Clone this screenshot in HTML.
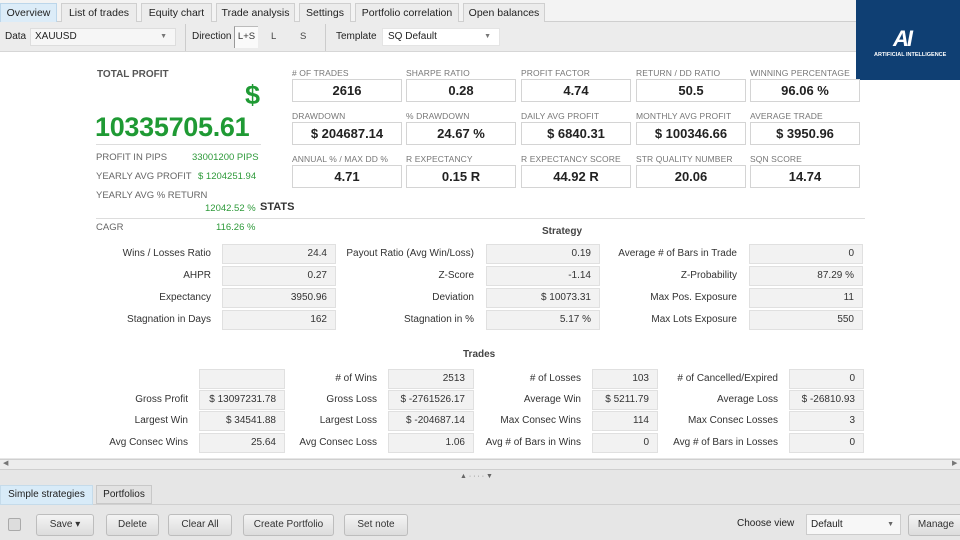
<!DOCTYPE html>
<html><head><meta charset="utf-8"><style>
*{margin:0;padding:0;box-sizing:border-box}
body{width:960px;height:540px;overflow:hidden;background:#fff;font-family:"Liberation Sans",sans-serif;font-size:10px;color:#333;position:relative}
.a{position:absolute;white-space:nowrap}
.tab{position:absolute;top:3px;height:19px;border:1px solid #cfcfcf;border-bottom:none;background:#ececec;font-size:10.5px;line-height:18px;text-align:center;color:#222}
.ml{position:absolute;font-size:8.5px;color:#777;letter-spacing:.1px}
.mb{position:absolute;width:110px;height:23px;border:1px solid #d4d4d4;background:#fff;font-weight:bold;font-size:13px;line-height:21px;text-align:center;color:#222}
.lb{position:absolute;text-align:right;font-size:10px;color:#333;line-height:19px}
.vb{position:absolute;height:20px;background:#f2f2f2;border:1px solid #e0e0e0;text-align:right;padding-right:8px;font-size:10px;line-height:18px;color:#333}
.gl{position:absolute;font-size:9.5px;color:#666}
.gv{position:absolute;font-size:9.5px;color:#2e9a3a}
.btn{position:absolute;top:514px;height:22px;border:1px solid #bdbdbd;border-radius:3px;background:linear-gradient(#f4f4f4,#dcdcdc);font-size:10px;line-height:20px;text-align:center;color:#333}
</style></head><body>
<!-- top tabs bar -->
<div class="a" style="left:0;top:0;width:960px;height:22px;background:#f3f3f3;border-bottom:1px solid #cfcfcf"></div>
<div class="tab" style="left:0;width:57px;background:#dcecf8;border-color:#bcd6ea">Overview</div>
<div class="tab" style="left:61;left:61px;width:76px">List of trades</div>
<div class="tab" style="left:141px;width:71px">Equity chart</div>
<div class="tab" style="left:216px;width:79px">Trade analysis</div>
<div class="tab" style="left:299px;width:52px">Settings</div>
<div class="tab" style="left:355px;width:104px">Portfolio correlation</div>
<div class="tab" style="left:463px;width:82px">Open balances</div>
<!-- toolbar -->
<div class="a" style="left:0;top:22px;width:960px;height:30px;background:#ececec;border-bottom:1px solid #d6d6d6"></div>
<div class="a" style="left:5px;top:31px;font-size:10px;color:#222">Data</div>
<div class="a" style="left:30px;top:28px;width:146px;height:18px;background:#f6f6f6;border:1px solid #ddd;font-size:10px;line-height:16px;padding-left:4px;color:#222">XAUUSD<span style="position:absolute;right:8px;font-size:7px;color:#777">▼</span></div>
<div class="a" style="left:185px;top:24px;width:1px;height:27px;background:#ccc"></div>
<div class="a" style="left:192px;top:31px;font-size:10px;color:#222">Direction</div>
<div class="a" style="left:234px;top:26px;width:24px;height:22px;background:#fafafa;border-left:1px solid #999;border-top:1px solid #bbb;font-size:9.5px;line-height:20px;text-align:center;color:#333">L+S</div>
<div class="a" style="left:271px;top:31px;font-size:9.5px;color:#444">L</div>
<div class="a" style="left:300px;top:31px;font-size:9.5px;color:#444">S</div>
<div class="a" style="left:325px;top:24px;width:1px;height:27px;background:#ccc"></div>
<div class="a" style="left:336px;top:31px;font-size:10px;color:#222">Template</div>
<div class="a" style="left:382px;top:28px;width:118px;height:18px;background:#fff;border:1px solid #e4e4e4;font-size:10px;line-height:16px;padding-left:5px;color:#222">SQ Default<span style="position:absolute;right:8px;font-size:7px;color:#777">▼</span></div>
<!-- logo -->
<div class="a" style="left:856px;top:0;width:104px;height:80px;background:#0f3f73"></div>
<div class="a" style="left:893px;top:26px;font-size:22px;font-weight:bold;font-style:italic;color:#fff;letter-spacing:-2px">AI</div>
<div class="a" style="left:874px;top:52px;font-size:5.5px;font-weight:bold;color:#fff">ARTIFICIAL INTELLIGENCE</div>
<!-- total profit -->
<div class="a" style="left:97px;top:69px;font-size:10px;font-weight:bold;color:#555">TOTAL PROFIT</div>
<div class="a" style="left:245px;top:80px;font-size:27px;font-weight:bold;color:#1f9a34">$</div>
<div class="a" style="left:95px;top:112px;font-size:27px;font-weight:bold;color:#1f9a34;letter-spacing:-.3px">10335705.61</div>
<div class="a" style="left:96px;top:144px;width:165px;height:1px;background:#ddd"></div>
<div class="gl" style="left:96px;top:152px">PROFIT IN PIPS</div><div class="gv" style="left:192px;top:152px">33001200 PIPS</div>
<div class="gl" style="left:96px;top:171px">YEARLY AVG PROFIT</div><div class="gv" style="left:198px;top:171px">$ 1204251.94</div>
<div class="gl" style="left:96px;top:190px">YEARLY AVG % RETURN</div><div class="gv" style="left:205px;top:203px">12042.52 %</div>
<div class="a" style="left:260px;top:201px;font-size:11px;font-weight:bold;color:#333">STATS</div>
<div class="a" style="left:96px;top:218px;width:769px;height:1px;background:#ddd"></div>
<div class="gl" style="left:96px;top:222px">CAGR</div><div class="gv" style="left:216px;top:222px">116.26 %</div>
<!-- metrics -->
<div class="ml" style="left:292px;top:68px"># OF TRADES</div><div class="mb" style="left:292px;top:79px">2616</div>
<div class="ml" style="left:406px;top:68px">SHARPE RATIO</div><div class="mb" style="left:406px;top:79px">0.28</div>
<div class="ml" style="left:521px;top:68px">PROFIT FACTOR</div><div class="mb" style="left:521px;top:79px">4.74</div>
<div class="ml" style="left:636px;top:68px">RETURN / DD RATIO</div><div class="mb" style="left:636px;top:79px">50.5</div>
<div class="ml" style="left:750px;top:68px">WINNING PERCENTAGE</div><div class="mb" style="left:750px;top:79px">96.06 %</div>
<div class="ml" style="left:292px;top:111px">DRAWDOWN</div><div class="mb" style="left:292px;top:122px">$ 204687.14</div>
<div class="ml" style="left:406px;top:111px">% DRAWDOWN</div><div class="mb" style="left:406px;top:122px">24.67 %</div>
<div class="ml" style="left:521px;top:111px">DAILY AVG PROFIT</div><div class="mb" style="left:521px;top:122px">$ 6840.31</div>
<div class="ml" style="left:636px;top:111px">MONTHLY AVG PROFIT</div><div class="mb" style="left:636px;top:122px">$ 100346.66</div>
<div class="ml" style="left:750px;top:111px">AVERAGE TRADE</div><div class="mb" style="left:750px;top:122px">$ 3950.96</div>
<div class="ml" style="left:292px;top:154px">ANNUAL % / MAX DD %</div><div class="mb" style="left:292px;top:165px">4.71</div>
<div class="ml" style="left:406px;top:154px">R EXPECTANCY</div><div class="mb" style="left:406px;top:165px">0.15 R</div>
<div class="ml" style="left:521px;top:154px">R EXPECTANCY SCORE</div><div class="mb" style="left:521px;top:165px">44.92 R</div>
<div class="ml" style="left:636px;top:154px">STR QUALITY NUMBER</div><div class="mb" style="left:636px;top:165px">20.06</div>
<div class="ml" style="left:750px;top:154px">SQN SCORE</div><div class="mb" style="left:750px;top:165px">14.74</div>
<!-- strategy -->
<div class="a" style="left:542px;top:226px;font-size:10px;font-weight:bold;color:#444">Strategy</div>
<div class="lb" style="left:60px;width:151px;top:244px">Wins / Losses Ratio</div><div class="vb" style="left:222px;width:114px;top:244px">24.4</div>
<div class="lb" style="left:300px;width:174px;top:244px">Payout Ratio (Avg Win/Loss)</div><div class="vb" style="left:486px;width:114px;top:244px">0.19</div>
<div class="lb" style="left:580px;width:157px;top:244px">Average # of Bars in Trade</div><div class="vb" style="left:749px;width:114px;top:244px">0</div>
<div class="lb" style="left:60px;width:151px;top:266px">AHPR</div><div class="vb" style="left:222px;width:114px;top:266px">0.27</div>
<div class="lb" style="left:300px;width:174px;top:266px">Z-Score</div><div class="vb" style="left:486px;width:114px;top:266px">-1.14</div>
<div class="lb" style="left:580px;width:157px;top:266px">Z-Probability</div><div class="vb" style="left:749px;width:114px;top:266px">87.29 %</div>
<div class="lb" style="left:60px;width:151px;top:288px">Expectancy</div><div class="vb" style="left:222px;width:114px;top:288px">3950.96</div>
<div class="lb" style="left:300px;width:174px;top:288px">Deviation</div><div class="vb" style="left:486px;width:114px;top:288px">$ 10073.31</div>
<div class="lb" style="left:580px;width:157px;top:288px">Max Pos. Exposure</div><div class="vb" style="left:749px;width:114px;top:288px">11</div>
<div class="lb" style="left:60px;width:151px;top:310px">Stagnation in Days</div><div class="vb" style="left:222px;width:114px;top:310px">162</div>
<div class="lb" style="left:300px;width:174px;top:310px">Stagnation in %</div><div class="vb" style="left:486px;width:114px;top:310px">5.17 %</div>
<div class="lb" style="left:580px;width:157px;top:310px">Max Lots Exposure</div><div class="vb" style="left:749px;width:114px;top:310px">550</div>
<!-- trades -->
<div class="a" style="left:463px;top:349px;font-size:10px;font-weight:bold;color:#444">Trades</div>
<div class="vb" style="left:199px;width:86px;top:369px"></div>
<div class="lb" style="left:290px;width:87px;top:369px"># of Wins</div><div class="vb" style="left:388px;width:86px;top:369px">2513</div>
<div class="lb" style="left:470px;width:111px;top:369px"># of Losses</div><div class="vb" style="left:592px;width:66px;top:369px">103</div>
<div class="lb" style="left:660px;width:118px;top:369px"># of Cancelled/Expired</div><div class="vb" style="left:789px;width:75px;top:369px">0</div>
<div class="lb" style="left:60px;width:128px;top:390px">Gross Profit</div><div class="vb" style="left:199px;width:86px;top:390px">$ 13097231.78</div>
<div class="lb" style="left:290px;width:87px;top:390px">Gross Loss</div><div class="vb" style="left:388px;width:86px;top:390px">$ -2761526.17</div>
<div class="lb" style="left:470px;width:111px;top:390px">Average Win</div><div class="vb" style="left:592px;width:66px;top:390px">$ 5211.79</div>
<div class="lb" style="left:660px;width:118px;top:390px">Average Loss</div><div class="vb" style="left:789px;width:75px;top:390px">$ -26810.93</div>
<div class="lb" style="left:60px;width:128px;top:411px">Largest Win</div><div class="vb" style="left:199px;width:86px;top:411px">$ 34541.88</div>
<div class="lb" style="left:290px;width:87px;top:411px">Largest Loss</div><div class="vb" style="left:388px;width:86px;top:411px">$ -204687.14</div>
<div class="lb" style="left:470px;width:111px;top:411px">Max Consec Wins</div><div class="vb" style="left:592px;width:66px;top:411px">114</div>
<div class="lb" style="left:660px;width:118px;top:411px">Max Consec Losses</div><div class="vb" style="left:789px;width:75px;top:411px">3</div>
<div class="lb" style="left:60px;width:128px;top:433px">Avg Consec Wins</div><div class="vb" style="left:199px;width:86px;top:433px">25.64</div>
<div class="lb" style="left:290px;width:87px;top:433px">Avg Consec Loss</div><div class="vb" style="left:388px;width:86px;top:433px">1.06</div>
<div class="lb" style="left:470px;width:111px;top:433px">Avg # of Bars in Wins</div><div class="vb" style="left:592px;width:66px;top:433px">0</div>
<div class="lb" style="left:660px;width:118px;top:433px">Avg # of Bars in Losses</div><div class="vb" style="left:789px;width:75px;top:433px">0</div>
<!-- scrollbar & bottom -->
<div class="a" style="left:0;top:458px;width:960px;height:82px;background:#e6e6e6"></div>
<div class="a" style="left:0;top:459px;width:960px;height:11px;background:#ededed;border-top:1px solid #cfcfcf;border-bottom:1px solid #cfcfcf"></div>
<div class="a" style="left:3px;top:459px;font-size:7px;color:#777">◀</div>
<div class="a" style="left:952px;top:459px;font-size:7px;color:#777">▶</div>
<div class="a" style="left:460px;top:473px;font-size:7px;color:#666">▲ · · · · ▼</div>
<div class="a" style="left:0;top:504px;width:960px;height:1px;background:#d0d0d0"></div>
<div class="a" style="left:0;top:485px;width:93px;height:20px;background:#d8ebf8;border:1px solid #c5dbea;font-size:10px;line-height:18px;text-align:center;color:#222">Simple strategies</div>
<div class="a" style="left:96px;top:485px;width:56px;height:19px;background:#e2e2e2;border:1px solid #c8c8c8;font-size:10px;line-height:17px;text-align:center;color:#222">Portfolios</div>
<div class="a" style="left:8px;top:518px;width:13px;height:13px;background:#ddd;border:1px solid #aaa;border-radius:2px"></div>
<div class="btn" style="left:36px;width:58px">Save ▾</div>
<div class="btn" style="left:106px;width:53px">Delete</div>
<div class="btn" style="left:168px;width:64px">Clear All</div>
<div class="btn" style="left:243px;width:91px">Create Portfolio</div>
<div class="btn" style="left:344px;width:64px">Set note</div>
<div class="a" style="left:737px;top:518px;font-size:10px;color:#222">Choose view</div>
<div class="a" style="left:806px;top:514px;width:95px;height:21px;background:#f7f7f7;border:1px solid #ccc;font-size:10px;line-height:19px;padding-left:4px;color:#222">Default<span style="position:absolute;right:6px;font-size:7px;color:#666">▼</span></div>
<div class="btn" style="left:908px;width:56px">Manage</div>
</body></html>
